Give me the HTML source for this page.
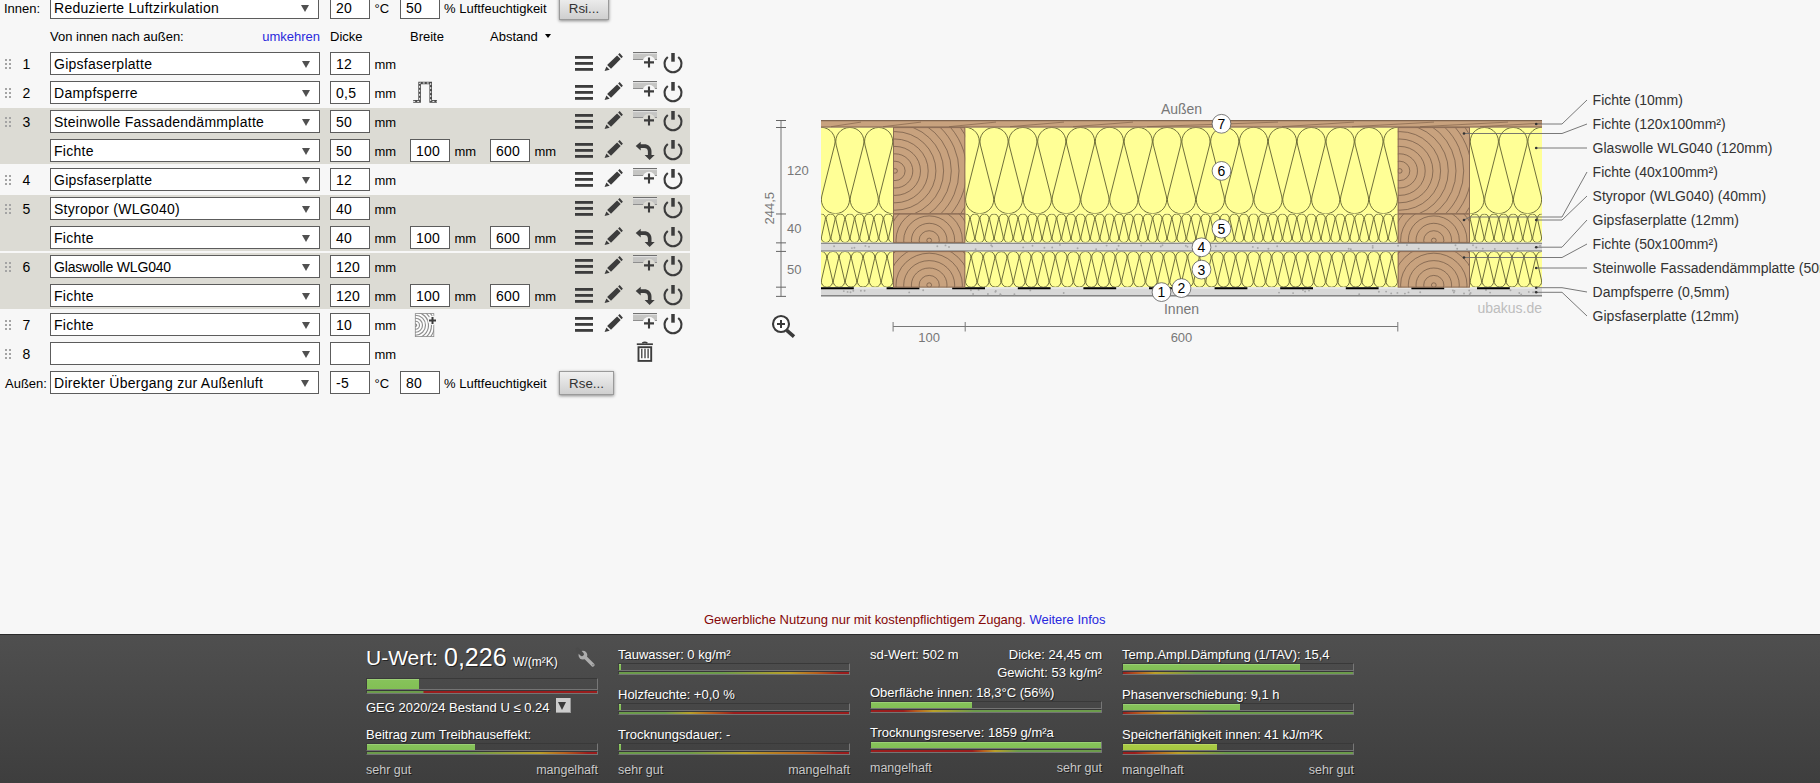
<!DOCTYPE html>
<html><head><meta charset="utf-8"><title>U-Wert</title>
<style>
html,body{margin:0;padding:0}
body{width:1820px;height:783px;overflow:hidden;position:relative;background:#f7f7f7;font-family:"Liberation Sans",sans-serif;font-size:13px;color:#000}
.ab{position:absolute}
.t{position:absolute;white-space:nowrap;line-height:23px;height:23px}
.sel,.inp{position:absolute;box-sizing:border-box;height:23px;border:1px solid #5c5c5c;background:#fff;font-size:14px;line-height:23px;white-space:nowrap;overflow:hidden;letter-spacing:.27px}
.sel{padding-left:3px}
.sel:after{content:"";position:absolute;right:9.5px;top:7.5px;border-left:4.2px solid transparent;border-right:4.2px solid transparent;border-top:7.4px solid #505050}
.inp{width:40px;padding-left:5px}
.gr{position:absolute;left:0;width:690px;background:#dcdbd4}
.btn{position:absolute;box-sizing:border-box;height:24px;border:1px solid #9a9a9a;background:linear-gradient(#f0f0f0,#cfcfcf);box-shadow:0 1px 3px rgba(0,0,0,.45);font-size:13.33px;line-height:23.6px;text-align:center;color:#333}
svg{overflow:visible}
#pn{position:absolute;left:0;top:634px;width:1820px;height:149px;background:linear-gradient(#4f4f4f,#3e3e3e);border-top:1px solid #2b2b2b;box-sizing:border-box;color:#fff;text-shadow:1px 1px 0 rgba(0,0,0,.55)}
#pn .p{position:absolute;white-space:nowrap;line-height:15px}
.bar{position:absolute;width:232px;box-sizing:border-box}
.bar i{display:block;position:absolute;left:0;width:232px;box-sizing:border-box}
.lo{color:#c8c8c8;font-size:12.5px}
</style></head><body>
<svg width="0" height="0" style="position:absolute"><defs>
<linearGradient id="lg" x1="0" y1="0" x2="0" y2="1"><stop offset="0" stop-color="#8c8c8c"/><stop offset=".16" stop-color="#d6d6d6"/><stop offset=".8" stop-color="#c6c6c6"/><stop offset="1" stop-color="#dedede"/></linearGradient>
<g id="ham" fill="#3c3c3c"><rect x="0" y="4" width="18" height="2.8"/><rect x="0" y="10" width="18" height="2.8"/><rect x="0" y="16" width="18" height="2.8"/></g>
<g id="pen" fill="#3c3c3c"><path d="M0 18.9L1.8 14.4L5.1 17.7Z"/><path d="M2.5 13.1L12.5 3.4L16.1 7L6.4 16.7Z"/><path d="M13.5 2.4L15 1L18.3 4.8L16.8 6.3Z"/></g>
<g id="add"><rect x="0" y="0" width="24" height="8" fill="#c5c5c3"/><rect x="0" y="0" width="24" height="1" fill="#707070"/><rect x="0" y="1" width="24" height="1.1" fill="#e0e0df"/><rect x="0" y="7" width="24" height="1" fill="#8e8e8e"/><circle cx="16" cy="10.4" r="6.6" fill="currentColor"/><path d="M11 10.4H21M16 5.4V15.4" stroke="#3c3c3c" stroke-width="2.1" fill="none"/></g>
<g id="pow" fill="none" stroke="#3c3c3c"><path d="M5.2 5A8.5 8.5 0 1 1 -5.2 5" stroke-width="2.1"/><path d="M0 1V9.7" stroke-width="3.5"/></g>
<g id="ret" fill="#3c3c3c"><path d="M0 7.1L5 2.7V5.3H8.5C12.5 5.3 15.8 8 15.8 12.5V16H19L13.9 21L8.9 16H12.2V12.5C12.2 10 10.6 8.9 8.5 8.9H5V11.6Z"/></g>
<g id="drg" fill="#a4a4a4"><rect x="0" y="0" width="2" height="2"/><rect x="4" y="0" width="2" height="2"/><rect x="0" y="4" width="2" height="2"/><rect x="4" y="4" width="2" height="2"/><rect x="0" y="8" width="2" height="2"/><rect x="4" y="8" width="2" height="2"/></g>
</defs></svg>
<div class="gr" style="top:108px;height:56px"></div>
<div class="gr" style="top:195px;height:56px"></div>
<div class="gr" style="top:253px;height:56px"></div>
<div class="t" style="left:4px;top:-3px;">Innen:</div>
<div class="sel" style="left:50px;top:-4px;width:269px">Reduzierte Luftzirkulation</div>
<div class="inp" style="left:330px;top:-4px">20</div>
<div class="t" style="left:374.5px;top:-3px;">°C</div>
<div class="inp" style="left:400px;top:-4px">50</div>
<div class="t" style="left:444px;top:-3px;">% Luftfeuchtigkeit</div>
<div class="btn" style="left:559px;top:-4px;width:50px;height:24px">Rsi...</div>
<div class="t" style="left:50px;top:25px">Von innen nach außen:</div>
<div class="t" style="left:262px;top:25px;width:58px;text-align:right;color:#2a2adc">umkehren</div>
<div class="t" style="left:330px;top:25px">Dicke</div><div class="t" style="left:410px;top:25px">Breite</div><div class="t" style="left:490px;top:25px">Abstand</div>
<div class="ab" style="left:544.6px;top:33.8px;border-left:3.1px solid transparent;border-right:3.1px solid transparent;border-top:4.9px solid #000"></div>
<div class="t" style="left:19px;top:53px;width:15px;text-align:center;font-size:14px">1</div>
<div class="sel" style="left:50px;top:52px;width:270px">Gipsfaserplatte</div>
<div class="inp" style="left:330px;top:52px">12</div>
<div class="t" style="left:374.5px;top:53px;">mm</div>
<div class="t" style="left:19px;top:82px;width:15px;text-align:center;font-size:14px">2</div>
<div class="sel" style="left:50px;top:81px;width:270px">Dampfsperre</div>
<div class="inp" style="left:330px;top:81px">0,5</div>
<div class="t" style="left:374.5px;top:82px;">mm</div>
<div class="t" style="left:19px;top:111px;width:15px;text-align:center;font-size:14px">3</div>
<div class="sel" style="left:50px;top:110px;width:270px">Steinwolle Fassadendämmplatte</div>
<div class="inp" style="left:330px;top:110px">50</div>
<div class="t" style="left:374.5px;top:111px;">mm</div>
<div class="sel" style="left:50px;top:139px;width:270px">Fichte</div>
<div class="inp" style="left:330px;top:139px">50</div>
<div class="t" style="left:374.5px;top:140px;">mm</div>
<div class="inp" style="left:410px;top:139px">100</div>
<div class="t" style="left:454.5px;top:140px;">mm</div>
<div class="inp" style="left:490px;top:139px">600</div>
<div class="t" style="left:534.5px;top:140px;">mm</div>
<div class="t" style="left:19px;top:169px;width:15px;text-align:center;font-size:14px">4</div>
<div class="sel" style="left:50px;top:168px;width:270px">Gipsfaserplatte</div>
<div class="inp" style="left:330px;top:168px">12</div>
<div class="t" style="left:374.5px;top:169px;">mm</div>
<div class="t" style="left:19px;top:198px;width:15px;text-align:center;font-size:14px">5</div>
<div class="sel" style="left:50px;top:197px;width:270px">Styropor (WLG040)</div>
<div class="inp" style="left:330px;top:197px">40</div>
<div class="t" style="left:374.5px;top:198px;">mm</div>
<div class="sel" style="left:50px;top:226px;width:270px">Fichte</div>
<div class="inp" style="left:330px;top:226px">40</div>
<div class="t" style="left:374.5px;top:227px;">mm</div>
<div class="inp" style="left:410px;top:226px">100</div>
<div class="t" style="left:454.5px;top:227px;">mm</div>
<div class="inp" style="left:490px;top:226px">600</div>
<div class="t" style="left:534.5px;top:227px;">mm</div>
<div class="t" style="left:19px;top:256px;width:15px;text-align:center;font-size:14px">6</div>
<div class="sel" style="left:50px;top:255px;width:270px;letter-spacing:-.18px">Glaswolle WLG040</div>
<div class="inp" style="left:330px;top:255px">120</div>
<div class="t" style="left:374.5px;top:256px;">mm</div>
<div class="sel" style="left:50px;top:284px;width:270px">Fichte</div>
<div class="inp" style="left:330px;top:284px">120</div>
<div class="t" style="left:374.5px;top:285px;">mm</div>
<div class="inp" style="left:410px;top:284px">100</div>
<div class="t" style="left:454.5px;top:285px;">mm</div>
<div class="inp" style="left:490px;top:284px">600</div>
<div class="t" style="left:534.5px;top:285px;">mm</div>
<div class="t" style="left:19px;top:314px;width:15px;text-align:center;font-size:14px">7</div>
<div class="sel" style="left:50px;top:313px;width:270px">Fichte</div>
<div class="inp" style="left:330px;top:313px">10</div>
<div class="t" style="left:374.5px;top:314px;">mm</div>
<div class="t" style="left:19px;top:343px;width:15px;text-align:center;font-size:14px">8</div>
<div class="sel" style="left:50px;top:342px;width:270px"></div>
<div class="inp" style="left:330px;top:342px"></div>
<div class="t" style="left:374.5px;top:343px;">mm</div>
<div class="t" style="left:5px;top:372px;">Außen:</div>
<div class="sel" style="left:50px;top:371px;width:269px">Direkter Übergang zur Außenluft</div>
<div class="inp" style="left:330px;top:371px">-5</div>
<div class="t" style="left:374.5px;top:372px;">°C</div>
<div class="inp" style="left:400px;top:371px">80</div>
<div class="t" style="left:444px;top:372px;">% Luftfeuchtigkeit</div>
<div class="btn" style="left:559px;top:371px;width:55px;height:24px">Rse...</div>
<svg class="ab" style="left:0;top:0" width="700" height="400" viewBox="0 0 700 400">
<use href="#drg" x="5" y="59"/><use href="#ham" x="575" y="52"/><use href="#pen" x="604.6" y="52"/><use href="#pow" x="673" y="52"/><use href="#add" x="633" y="52" style="color:#f7f7f7"/><use href="#drg" x="5" y="88"/><use href="#ham" x="575" y="81"/><use href="#pen" x="604.6" y="81"/><use href="#pow" x="673" y="81"/><use href="#add" x="633" y="81" style="color:#f7f7f7"/><use href="#drg" x="5" y="117"/><use href="#ham" x="575" y="110"/><use href="#pen" x="604.6" y="110"/><use href="#pow" x="673" y="110"/><use href="#add" x="633" y="110" style="color:#dcdbd4"/><use href="#ham" x="575" y="139"/><use href="#pen" x="604.6" y="139"/><use href="#pow" x="673" y="139"/><use href="#ret" x="635.7" y="139"/><use href="#drg" x="5" y="175"/><use href="#ham" x="575" y="168"/><use href="#pen" x="604.6" y="168"/><use href="#pow" x="673" y="168"/><use href="#add" x="633" y="168" style="color:#f7f7f7"/><use href="#drg" x="5" y="204"/><use href="#ham" x="575" y="197"/><use href="#pen" x="604.6" y="197"/><use href="#pow" x="673" y="197"/><use href="#add" x="633" y="197" style="color:#dcdbd4"/><use href="#ham" x="575" y="226"/><use href="#pen" x="604.6" y="226"/><use href="#pow" x="673" y="226"/><use href="#ret" x="635.7" y="226"/><use href="#drg" x="5" y="262"/><use href="#ham" x="575" y="255"/><use href="#pen" x="604.6" y="255"/><use href="#pow" x="673" y="255"/><use href="#add" x="633" y="255" style="color:#dcdbd4"/><use href="#ham" x="575" y="284"/><use href="#pen" x="604.6" y="284"/><use href="#pow" x="673" y="284"/><use href="#ret" x="635.7" y="284"/><use href="#drg" x="5" y="320"/><use href="#ham" x="575" y="313"/><use href="#pen" x="604.6" y="313"/><use href="#pow" x="673" y="313"/><use href="#add" x="633" y="313" style="color:#f7f7f7"/><use href="#drg" x="5" y="349"/>
<g fill="none"><path d="M413.2 101.4H419.6V83H430.7V101.4H436.9" stroke="#4a4a4a" stroke-width="2.6"/><path d="M413.2 101.4H419.6V83H430.7V101.4H436.9" stroke="#f4f4f4" stroke-width="1" stroke-dasharray="2 2"/></g>
<g><clipPath id="wc"><rect x="415" y="313.3" width="19" height="23.5"/></clipPath><rect x="415" y="313.3" width="19" height="23.5" fill="#fdfdfd"/><g clip-path="url(#wc)" fill="none" stroke="#8e8e8e" stroke-width="1.15"><circle cx="415.5" cy="325.2" r="1.2"/><circle cx="415.5" cy="325.2" r="4"/><circle cx="415.5" cy="325.2" r="7"/><circle cx="415.5" cy="325.2" r="10"/><circle cx="415.5" cy="325.2" r="13"/><circle cx="415.5" cy="325.2" r="16"/><circle cx="415.5" cy="325.2" r="19"/><circle cx="415.5" cy="325.2" r="22"/></g><rect x="415.3" y="313.6" width="18.5" height="23" stroke="#8c8c8c" stroke-width=".8" fill="none"/><circle cx="432.5" cy="320.4" r="4.6" fill="#f7f7f7"/><path d="M429 320.4H436M432.5 316.9V323.9" stroke="#3c3c3c" stroke-width="2" fill="none"/></g>
<g fill="none" stroke="#3c3c3c"><path d="M636.8 344.2H652.9" stroke-width="1.7"/><path d="M642.3 343.2Q644.8 341.4 647.4 343.2" stroke-width="1.6"/><rect x="638.5" y="347.2" width="12.7" height="13.7" stroke-width="1.9" fill="#fff"/><path d="M641.8 348.8V358.2M645 348.8V358.2M648.1 348.8V358.2" stroke-width="1.3"/></g>
</svg>
<svg width="1080" height="300" viewBox="740 60 1080 300" style="position:absolute;left:740px;top:60px;font-family:'Liberation Sans',sans-serif">
<defs>
<clipPath id="cA"><rect x="821" y="120.1" width="721" height="176.3"/></clipPath>
<clipPath id="b00"><rect x="893.1" y="127.3" width="72.1" height="86.5"/></clipPath>
<clipPath id="b01"><rect x="893.1" y="213.8" width="72.1" height="28.8"/></clipPath>
<clipPath id="b02"><rect x="893.1" y="251.3" width="72.1" height="36"/></clipPath>
<clipPath id="b10"><rect x="1397.8" y="127.3" width="72.1" height="86.5"/></clipPath>
<clipPath id="b11"><rect x="1397.8" y="213.8" width="72.1" height="28.8"/></clipPath>
<clipPath id="b12"><rect x="1397.8" y="251.3" width="72.1" height="36"/></clipPath>
<clipPath id="w1"><rect x="821" y="127.3" width="721" height="86.5"/></clipPath>
<clipPath id="w2"><rect x="821" y="213.8" width="721" height="28.8"/></clipPath>
<clipPath id="w4"><rect x="821" y="251.3" width="721" height="36"/></clipPath>
</defs>
<rect x="821" y="127.3" width="721" height="86.5" fill="#ffff96"/>
<path clip-path="url(#w1)" d="M778.5 145.1A14.1 14.1 0 1 1 805.8 145.1L792.9 196A14.1 14.1 0 1 0 820.2 196L807.4 145.1A14.1 14.1 0 1 1 834.6 145.1L821.8 196A14.1 14.1 0 1 0 849.1 196L836.2 145.1A14.1 14.1 0 1 1 863.5 145.1L850.6 196A14.1 14.1 0 1 0 877.9 196L865 145.1A14.1 14.1 0 1 1 892.3 145.1L879.5 196A14.1 14.1 0 1 0 906.7 196L893.9 145.1A14.1 14.1 0 1 1 921.2 145.1L908.3 196A14.1 14.1 0 1 0 935.6 196L922.7 145.1A14.1 14.1 0 1 1 950 145.1L937.1 196A14.1 14.1 0 1 0 964.4 196L951.6 145.1A14.1 14.1 0 1 1 978.8 145.1L966 196A14.1 14.1 0 1 0 993.3 196L980.4 145.1A14.1 14.1 0 1 1 1007.7 145.1L994.8 196A14.1 14.1 0 1 0 1022.1 196L1009.2 145.1A14.1 14.1 0 1 1 1036.5 145.1L1023.7 196A14.1 14.1 0 1 0 1050.9 196L1038.1 145.1A14.1 14.1 0 1 1 1065.4 145.1L1052.5 196A14.1 14.1 0 1 0 1079.8 196L1066.9 145.1A14.1 14.1 0 1 1 1094.2 145.1L1081.3 196A14.1 14.1 0 1 0 1108.6 196L1095.8 145.1A14.1 14.1 0 1 1 1123 145.1L1110.2 196A14.1 14.1 0 1 0 1137.5 196L1124.6 145.1A14.1 14.1 0 1 1 1151.9 145.1L1139 196A14.1 14.1 0 1 0 1166.3 196L1153.4 145.1A14.1 14.1 0 1 1 1180.7 145.1L1167.9 196A14.1 14.1 0 1 0 1195.1 196L1182.3 145.1A14.1 14.1 0 1 1 1209.6 145.1L1196.7 196A14.1 14.1 0 1 0 1224 196L1211.1 145.1A14.1 14.1 0 1 1 1238.4 145.1L1225.5 196A14.1 14.1 0 1 0 1252.8 196L1240 145.1A14.1 14.1 0 1 1 1267.2 145.1L1254.4 196A14.1 14.1 0 1 0 1281.7 196L1268.8 145.1A14.1 14.1 0 1 1 1296.1 145.1L1283.2 196A14.1 14.1 0 1 0 1310.5 196L1297.6 145.1A14.1 14.1 0 1 1 1324.9 145.1L1312.1 196A14.1 14.1 0 1 0 1339.3 196L1326.5 145.1A14.1 14.1 0 1 1 1353.8 145.1L1340.9 196A14.1 14.1 0 1 0 1368.2 196L1355.3 145.1A14.1 14.1 0 1 1 1382.6 145.1L1369.7 196A14.1 14.1 0 1 0 1397 196L1384.2 145.1A14.1 14.1 0 1 1 1411.4 145.1L1398.6 196A14.1 14.1 0 1 0 1425.9 196L1413 145.1A14.1 14.1 0 1 1 1440.3 145.1L1427.4 196A14.1 14.1 0 1 0 1454.7 196L1441.8 145.1A14.1 14.1 0 1 1 1469.1 145.1L1456.3 196A14.1 14.1 0 1 0 1483.5 196L1470.7 145.1A14.1 14.1 0 1 1 1498 145.1L1485.1 196A14.1 14.1 0 1 0 1512.4 196L1499.5 145.1A14.1 14.1 0 1 1 1526.8 145.1L1513.9 196A14.1 14.1 0 1 0 1541.2 196L1528.4 145.1A14.1 14.1 0 1 1 1555.6 145.1L1542.8 196A14.1 14.1 0 1 0 1570.1 196L1557.2 145.1A14.1 14.1 0 1 1 1584.5 145.1L1571.6 196A14.1 14.1 0 1 0 1598.9 196L1586 145.1" fill="none" stroke="#55552a" stroke-width="0.85"/>
<rect x="821" y="213.8" width="721" height="28.8" fill="#ffff96"/>
<path clip-path="url(#w2)" d="M807 219.6A4.5 4.5 0 1 1 815.7 219.6L811.8 236.9A4.5 4.5 0 1 0 820.5 236.9L816.7 219.6A4.5 4.5 0 1 1 825.3 219.6L821.5 236.9A4.5 4.5 0 1 0 830.2 236.9L826.3 219.6A4.5 4.5 0 1 1 835 219.6L831.1 236.9A4.5 4.5 0 1 0 839.8 236.9L835.9 219.6A4.5 4.5 0 1 1 844.6 219.6L840.7 236.9A4.5 4.5 0 1 0 849.4 236.9L845.5 219.6A4.5 4.5 0 1 1 854.2 219.6L850.3 236.9A4.5 4.5 0 1 0 859 236.9L855.1 219.6A4.5 4.5 0 1 1 863.8 219.6L859.9 236.9A4.5 4.5 0 1 0 868.6 236.9L864.7 219.6A4.5 4.5 0 1 1 873.4 219.6L869.5 236.9A4.5 4.5 0 1 0 878.2 236.9L874.3 219.6A4.5 4.5 0 1 1 883 219.6L879.1 236.9A4.5 4.5 0 1 0 887.8 236.9L883.9 219.6A4.5 4.5 0 1 1 892.6 219.6L888.8 236.9A4.5 4.5 0 1 0 897.4 236.9L893.6 219.6A4.5 4.5 0 1 1 902.3 219.6L898.4 236.9A4.5 4.5 0 1 0 907.1 236.9L903.2 219.6A4.5 4.5 0 1 1 911.9 219.6L908 236.9A4.5 4.5 0 1 0 916.7 236.9L912.8 219.6A4.5 4.5 0 1 1 921.5 219.6L917.6 236.9A4.5 4.5 0 1 0 926.3 236.9L922.4 219.6A4.5 4.5 0 1 1 931.1 219.6L927.2 236.9A4.5 4.5 0 1 0 935.9 236.9L932 219.6A4.5 4.5 0 1 1 940.7 219.6L936.8 236.9A4.5 4.5 0 1 0 945.5 236.9L941.6 219.6A4.5 4.5 0 1 1 950.3 219.6L946.4 236.9A4.5 4.5 0 1 0 955.1 236.9L951.2 219.6A4.5 4.5 0 1 1 959.9 219.6L956 236.9A4.5 4.5 0 1 0 964.7 236.9L960.9 219.6A4.5 4.5 0 1 1 969.5 219.6L965.7 236.9A4.5 4.5 0 1 0 974.4 236.9L970.5 219.6A4.5 4.5 0 1 1 979.2 219.6L975.3 236.9A4.5 4.5 0 1 0 984 236.9L980.1 219.6A4.5 4.5 0 1 1 988.8 219.6L984.9 236.9A4.5 4.5 0 1 0 993.6 236.9L989.7 219.6A4.5 4.5 0 1 1 998.4 219.6L994.5 236.9A4.5 4.5 0 1 0 1003.2 236.9L999.3 219.6A4.5 4.5 0 1 1 1008 219.6L1004.1 236.9A4.5 4.5 0 1 0 1012.8 236.9L1008.9 219.6A4.5 4.5 0 1 1 1017.6 219.6L1013.7 236.9A4.5 4.5 0 1 0 1022.4 236.9L1018.5 219.6A4.5 4.5 0 1 1 1027.2 219.6L1023.3 236.9A4.5 4.5 0 1 0 1032 236.9L1028.1 219.6A4.5 4.5 0 1 1 1036.8 219.6L1033 236.9A4.5 4.5 0 1 0 1041.6 236.9L1037.8 219.6A4.5 4.5 0 1 1 1046.5 219.6L1042.6 236.9A4.5 4.5 0 1 0 1051.3 236.9L1047.4 219.6A4.5 4.5 0 1 1 1056.1 219.6L1052.2 236.9A4.5 4.5 0 1 0 1060.9 236.9L1057 219.6A4.5 4.5 0 1 1 1065.7 219.6L1061.8 236.9A4.5 4.5 0 1 0 1070.5 236.9L1066.6 219.6A4.5 4.5 0 1 1 1075.3 219.6L1071.4 236.9A4.5 4.5 0 1 0 1080.1 236.9L1076.2 219.6A4.5 4.5 0 1 1 1084.9 219.6L1081 236.9A4.5 4.5 0 1 0 1089.7 236.9L1085.8 219.6A4.5 4.5 0 1 1 1094.5 219.6L1090.6 236.9A4.5 4.5 0 1 0 1099.3 236.9L1095.4 219.6A4.5 4.5 0 1 1 1104.1 219.6L1100.2 236.9A4.5 4.5 0 1 0 1108.9 236.9L1105.1 219.6A4.5 4.5 0 1 1 1113.7 219.6L1109.9 236.9A4.5 4.5 0 1 0 1118.6 236.9L1114.7 219.6A4.5 4.5 0 1 1 1123.4 219.6L1119.5 236.9A4.5 4.5 0 1 0 1128.2 236.9L1124.3 219.6A4.5 4.5 0 1 1 1133 219.6L1129.1 236.9A4.5 4.5 0 1 0 1137.8 236.9L1133.9 219.6A4.5 4.5 0 1 1 1142.6 219.6L1138.7 236.9A4.5 4.5 0 1 0 1147.4 236.9L1143.5 219.6A4.5 4.5 0 1 1 1152.2 219.6L1148.3 236.9A4.5 4.5 0 1 0 1157 236.9L1153.1 219.6A4.5 4.5 0 1 1 1161.8 219.6L1157.9 236.9A4.5 4.5 0 1 0 1166.6 236.9L1162.7 219.6A4.5 4.5 0 1 1 1171.4 219.6L1167.5 236.9A4.5 4.5 0 1 0 1176.2 236.9L1172.3 219.6A4.5 4.5 0 1 1 1181 219.6L1177.2 236.9A4.5 4.5 0 1 0 1185.8 236.9L1182 219.6A4.5 4.5 0 1 1 1190.7 219.6L1186.8 236.9A4.5 4.5 0 1 0 1195.5 236.9L1191.6 219.6A4.5 4.5 0 1 1 1200.3 219.6L1196.4 236.9A4.5 4.5 0 1 0 1205.1 236.9L1201.2 219.6A4.5 4.5 0 1 1 1209.9 219.6L1206 236.9A4.5 4.5 0 1 0 1214.7 236.9L1210.8 219.6A4.5 4.5 0 1 1 1219.5 219.6L1215.6 236.9A4.5 4.5 0 1 0 1224.3 236.9L1220.4 219.6A4.5 4.5 0 1 1 1229.1 219.6L1225.2 236.9A4.5 4.5 0 1 0 1233.9 236.9L1230 219.6A4.5 4.5 0 1 1 1238.7 219.6L1234.8 236.9A4.5 4.5 0 1 0 1243.5 236.9L1239.6 219.6A4.5 4.5 0 1 1 1248.3 219.6L1244.4 236.9A4.5 4.5 0 1 0 1253.1 236.9L1249.3 219.6A4.5 4.5 0 1 1 1257.9 219.6L1254.1 236.9A4.5 4.5 0 1 0 1262.8 236.9L1258.9 219.6A4.5 4.5 0 1 1 1267.6 219.6L1263.7 236.9A4.5 4.5 0 1 0 1272.4 236.9L1268.5 219.6A4.5 4.5 0 1 1 1277.2 219.6L1273.3 236.9A4.5 4.5 0 1 0 1282 236.9L1278.1 219.6A4.5 4.5 0 1 1 1286.8 219.6L1282.9 236.9A4.5 4.5 0 1 0 1291.6 236.9L1287.7 219.6A4.5 4.5 0 1 1 1296.4 219.6L1292.5 236.9A4.5 4.5 0 1 0 1301.2 236.9L1297.3 219.6A4.5 4.5 0 1 1 1306 219.6L1302.1 236.9A4.5 4.5 0 1 0 1310.8 236.9L1306.9 219.6A4.5 4.5 0 1 1 1315.6 219.6L1311.7 236.9A4.5 4.5 0 1 0 1320.4 236.9L1316.5 219.6A4.5 4.5 0 1 1 1325.2 219.6L1321.4 236.9A4.5 4.5 0 1 0 1330 236.9L1326.2 219.6A4.5 4.5 0 1 1 1334.9 219.6L1331 236.9A4.5 4.5 0 1 0 1339.7 236.9L1335.8 219.6A4.5 4.5 0 1 1 1344.5 219.6L1340.6 236.9A4.5 4.5 0 1 0 1349.3 236.9L1345.4 219.6A4.5 4.5 0 1 1 1354.1 219.6L1350.2 236.9A4.5 4.5 0 1 0 1358.9 236.9L1355 219.6A4.5 4.5 0 1 1 1363.7 219.6L1359.8 236.9A4.5 4.5 0 1 0 1368.5 236.9L1364.6 219.6A4.5 4.5 0 1 1 1373.3 219.6L1369.4 236.9A4.5 4.5 0 1 0 1378.1 236.9L1374.2 219.6A4.5 4.5 0 1 1 1382.9 219.6L1379 236.9A4.5 4.5 0 1 0 1387.7 236.9L1383.8 219.6A4.5 4.5 0 1 1 1392.5 219.6L1388.6 236.9A4.5 4.5 0 1 0 1397.3 236.9L1393.5 219.6A4.5 4.5 0 1 1 1402.1 219.6L1398.3 236.9A4.5 4.5 0 1 0 1407 236.9L1403.1 219.6A4.5 4.5 0 1 1 1411.8 219.6L1407.9 236.9A4.5 4.5 0 1 0 1416.6 236.9L1412.7 219.6A4.5 4.5 0 1 1 1421.4 219.6L1417.5 236.9A4.5 4.5 0 1 0 1426.2 236.9L1422.3 219.6A4.5 4.5 0 1 1 1431 219.6L1427.1 236.9A4.5 4.5 0 1 0 1435.8 236.9L1431.9 219.6A4.5 4.5 0 1 1 1440.6 219.6L1436.7 236.9A4.5 4.5 0 1 0 1445.4 236.9L1441.5 219.6A4.5 4.5 0 1 1 1450.2 219.6L1446.3 236.9A4.5 4.5 0 1 0 1455 236.9L1451.1 219.6A4.5 4.5 0 1 1 1459.8 219.6L1455.9 236.9A4.5 4.5 0 1 0 1464.6 236.9L1460.7 219.6A4.5 4.5 0 1 1 1469.4 219.6L1465.6 236.9A4.5 4.5 0 1 0 1474.2 236.9L1470.4 219.6A4.5 4.5 0 1 1 1479.1 219.6L1475.2 236.9A4.5 4.5 0 1 0 1483.9 236.9L1480 219.6A4.5 4.5 0 1 1 1488.7 219.6L1484.8 236.9A4.5 4.5 0 1 0 1493.5 236.9L1489.6 219.6A4.5 4.5 0 1 1 1498.3 219.6L1494.4 236.9A4.5 4.5 0 1 0 1503.1 236.9L1499.2 219.6A4.5 4.5 0 1 1 1507.9 219.6L1504 236.9A4.5 4.5 0 1 0 1512.7 236.9L1508.8 219.6A4.5 4.5 0 1 1 1517.5 219.6L1513.6 236.9A4.5 4.5 0 1 0 1522.3 236.9L1518.4 219.6A4.5 4.5 0 1 1 1527.1 219.6L1523.2 236.9A4.5 4.5 0 1 0 1531.9 236.9L1528 219.6A4.5 4.5 0 1 1 1536.7 219.6L1532.8 236.9A4.5 4.5 0 1 0 1541.5 236.9L1537.7 219.6A4.5 4.5 0 1 1 1546.3 219.6L1542.5 236.9A4.5 4.5 0 1 0 1551.2 236.9L1547.3 219.6" fill="none" stroke="#55552a" stroke-width="0.85"/>
<rect x="821" y="251.3" width="721" height="36" fill="#ffff96"/>
<path clip-path="url(#w4)" d="M803.5 258.6A5.7 5.7 0 1 1 814.5 258.6L809.5 280.1A5.7 5.7 0 1 0 820.5 280.1L815.5 258.6A5.7 5.7 0 1 1 826.5 258.6L821.5 280.1A5.7 5.7 0 1 0 832.5 280.1L827.5 258.6A5.7 5.7 0 1 1 838.5 258.6L833.5 280.1A5.7 5.7 0 1 0 844.5 280.1L839.5 258.6A5.7 5.7 0 1 1 850.5 258.6L845.5 280.1A5.7 5.7 0 1 0 856.6 280.1L851.5 258.6A5.7 5.7 0 1 1 862.6 258.6L857.5 280.1A5.7 5.7 0 1 0 868.6 280.1L863.6 258.6A5.7 5.7 0 1 1 874.6 258.6L869.6 280.1A5.7 5.7 0 1 0 880.6 280.1L875.6 258.6A5.7 5.7 0 1 1 886.6 258.6L881.6 280.1A5.7 5.7 0 1 0 892.6 280.1L887.6 258.6A5.7 5.7 0 1 1 898.6 258.6L893.6 280.1A5.7 5.7 0 1 0 904.6 280.1L899.6 258.6A5.7 5.7 0 1 1 910.6 258.6L905.6 280.1A5.7 5.7 0 1 0 916.6 280.1L911.6 258.6A5.7 5.7 0 1 1 922.6 258.6L917.6 280.1A5.7 5.7 0 1 0 928.7 280.1L923.6 258.6A5.7 5.7 0 1 1 934.7 258.6L929.6 280.1A5.7 5.7 0 1 0 940.7 280.1L935.7 258.6A5.7 5.7 0 1 1 946.7 258.6L941.7 280.1A5.7 5.7 0 1 0 952.7 280.1L947.7 258.6A5.7 5.7 0 1 1 958.7 258.6L953.7 280.1A5.7 5.7 0 1 0 964.7 280.1L959.7 258.6A5.7 5.7 0 1 1 970.7 258.6L965.7 280.1A5.7 5.7 0 1 0 976.7 280.1L971.7 258.6A5.7 5.7 0 1 1 982.7 258.6L977.7 280.1A5.7 5.7 0 1 0 988.7 280.1L983.7 258.6A5.7 5.7 0 1 1 994.7 258.6L989.7 280.1A5.7 5.7 0 1 0 1000.8 280.1L995.7 258.6A5.7 5.7 0 1 1 1006.8 258.6L1001.7 280.1A5.7 5.7 0 1 0 1012.8 280.1L1007.8 258.6A5.7 5.7 0 1 1 1018.8 258.6L1013.8 280.1A5.7 5.7 0 1 0 1024.8 280.1L1019.8 258.6A5.7 5.7 0 1 1 1030.8 258.6L1025.8 280.1A5.7 5.7 0 1 0 1036.8 280.1L1031.8 258.6A5.7 5.7 0 1 1 1042.8 258.6L1037.8 280.1A5.7 5.7 0 1 0 1048.8 280.1L1043.8 258.6A5.7 5.7 0 1 1 1054.8 258.6L1049.8 280.1A5.7 5.7 0 1 0 1060.8 280.1L1055.8 258.6A5.7 5.7 0 1 1 1066.8 258.6L1061.8 280.1A5.7 5.7 0 1 0 1072.9 280.1L1067.8 258.6A5.7 5.7 0 1 1 1078.9 258.6L1073.8 280.1A5.7 5.7 0 1 0 1084.9 280.1L1079.9 258.6A5.7 5.7 0 1 1 1090.9 258.6L1085.9 280.1A5.7 5.7 0 1 0 1096.9 280.1L1091.9 258.6A5.7 5.7 0 1 1 1102.9 258.6L1097.9 280.1A5.7 5.7 0 1 0 1108.9 280.1L1103.9 258.6A5.7 5.7 0 1 1 1114.9 258.6L1109.9 280.1A5.7 5.7 0 1 0 1120.9 280.1L1115.9 258.6A5.7 5.7 0 1 1 1126.9 258.6L1121.9 280.1A5.7 5.7 0 1 0 1132.9 280.1L1127.9 258.6A5.7 5.7 0 1 1 1138.9 258.6L1133.9 280.1A5.7 5.7 0 1 0 1145 280.1L1139.9 258.6A5.7 5.7 0 1 1 1151 258.6L1145.9 280.1A5.7 5.7 0 1 0 1157 280.1L1152 258.6A5.7 5.7 0 1 1 1163 258.6L1158 280.1A5.7 5.7 0 1 0 1169 280.1L1164 258.6A5.7 5.7 0 1 1 1175 258.6L1170 280.1A5.7 5.7 0 1 0 1181 280.1L1176 258.6A5.7 5.7 0 1 1 1187 258.6L1182 280.1A5.7 5.7 0 1 0 1193 280.1L1188 258.6A5.7 5.7 0 1 1 1199 258.6L1194 280.1A5.7 5.7 0 1 0 1205 280.1L1200 258.6A5.7 5.7 0 1 1 1211 258.6L1206 280.1A5.7 5.7 0 1 0 1217.1 280.1L1212 258.6A5.7 5.7 0 1 1 1223.1 258.6L1218 280.1A5.7 5.7 0 1 0 1229.1 280.1L1224.1 258.6A5.7 5.7 0 1 1 1235.1 258.6L1230.1 280.1A5.7 5.7 0 1 0 1241.1 280.1L1236.1 258.6A5.7 5.7 0 1 1 1247.1 258.6L1242.1 280.1A5.7 5.7 0 1 0 1253.1 280.1L1248.1 258.6A5.7 5.7 0 1 1 1259.1 258.6L1254.1 280.1A5.7 5.7 0 1 0 1265.1 280.1L1260.1 258.6A5.7 5.7 0 1 1 1271.1 258.6L1266.1 280.1A5.7 5.7 0 1 0 1277.1 280.1L1272.1 258.6A5.7 5.7 0 1 1 1283.1 258.6L1278.1 280.1A5.7 5.7 0 1 0 1289.2 280.1L1284.1 258.6A5.7 5.7 0 1 1 1295.2 258.6L1290.1 280.1A5.7 5.7 0 1 0 1301.2 280.1L1296.2 258.6A5.7 5.7 0 1 1 1307.2 258.6L1302.2 280.1A5.7 5.7 0 1 0 1313.2 280.1L1308.2 258.6A5.7 5.7 0 1 1 1319.2 258.6L1314.2 280.1A5.7 5.7 0 1 0 1325.2 280.1L1320.2 258.6A5.7 5.7 0 1 1 1331.2 258.6L1326.2 280.1A5.7 5.7 0 1 0 1337.2 280.1L1332.2 258.6A5.7 5.7 0 1 1 1343.2 258.6L1338.2 280.1A5.7 5.7 0 1 0 1349.2 280.1L1344.2 258.6A5.7 5.7 0 1 1 1355.2 258.6L1350.2 280.1A5.7 5.7 0 1 0 1361.3 280.1L1356.2 258.6A5.7 5.7 0 1 1 1367.3 258.6L1362.2 280.1A5.7 5.7 0 1 0 1373.3 280.1L1368.3 258.6A5.7 5.7 0 1 1 1379.3 258.6L1374.3 280.1A5.7 5.7 0 1 0 1385.3 280.1L1380.3 258.6A5.7 5.7 0 1 1 1391.3 258.6L1386.3 280.1A5.7 5.7 0 1 0 1397.3 280.1L1392.3 258.6A5.7 5.7 0 1 1 1403.3 258.6L1398.3 280.1A5.7 5.7 0 1 0 1409.3 280.1L1404.3 258.6A5.7 5.7 0 1 1 1415.3 258.6L1410.3 280.1A5.7 5.7 0 1 0 1421.3 280.1L1416.3 258.6A5.7 5.7 0 1 1 1427.3 258.6L1422.3 280.1A5.7 5.7 0 1 0 1433.4 280.1L1428.3 258.6A5.7 5.7 0 1 1 1439.4 258.6L1434.3 280.1A5.7 5.7 0 1 0 1445.4 280.1L1440.4 258.6A5.7 5.7 0 1 1 1451.4 258.6L1446.4 280.1A5.7 5.7 0 1 0 1457.4 280.1L1452.4 258.6A5.7 5.7 0 1 1 1463.4 258.6L1458.4 280.1A5.7 5.7 0 1 0 1469.4 280.1L1464.4 258.6A5.7 5.7 0 1 1 1475.4 258.6L1470.4 280.1A5.7 5.7 0 1 0 1481.4 280.1L1476.4 258.6A5.7 5.7 0 1 1 1487.4 258.6L1482.4 280.1A5.7 5.7 0 1 0 1493.4 280.1L1488.4 258.6A5.7 5.7 0 1 1 1499.4 258.6L1494.4 280.1A5.7 5.7 0 1 0 1505.5 280.1L1500.4 258.6A5.7 5.7 0 1 1 1511.5 258.6L1506.4 280.1A5.7 5.7 0 1 0 1517.5 280.1L1512.5 258.6A5.7 5.7 0 1 1 1523.5 258.6L1518.5 280.1A5.7 5.7 0 1 0 1529.5 280.1L1524.5 258.6A5.7 5.7 0 1 1 1535.5 258.6L1530.5 280.1A5.7 5.7 0 1 0 1541.5 280.1L1536.5 258.6A5.7 5.7 0 1 1 1547.5 258.6L1542.5 280.1A5.7 5.7 0 1 0 1553.5 280.1L1548.5 258.6A5.7 5.7 0 1 1 1559.5 258.6L1554.5 280.1A5.7 5.7 0 1 0 1565.5 280.1L1560.5 258.6" fill="none" stroke="#55552a" stroke-width="0.85"/>
<rect x="821" y="242.7" width="721" height="8.7" fill="#d8d8d8"/>
<path d="M821 243.4H1542M821 250.9H1542" stroke="#8e8e8e" stroke-width="1.2" fill="none"/>
<g fill="#a8a8a8"><circle cx="991.2" cy="245.3" r="0.95"/><circle cx="1106.6" cy="245.6" r="0.95"/><circle cx="869" cy="246.7" r="0.95"/><circle cx="1482.8" cy="248.6" r="0.95"/><circle cx="1372.7" cy="245.9" r="0.95"/><circle cx="1207.9" cy="246.2" r="0.95"/><circle cx="945.5" cy="245.4" r="0.95"/><circle cx="975.6" cy="249.2" r="0.95"/><circle cx="1418.7" cy="248.6" r="0.95"/><circle cx="1398.1" cy="245.8" r="0.95"/><circle cx="1044.4" cy="247.8" r="0.95"/><circle cx="1348.7" cy="248.8" r="0.95"/><circle cx="1455.5" cy="245.3" r="0.95"/><circle cx="1257.8" cy="248" r="0.95"/><circle cx="1185.8" cy="245.7" r="0.95"/><circle cx="1162.5" cy="245.3" r="0.95"/><circle cx="1494.8" cy="248.9" r="0.95"/><circle cx="1215.8" cy="246.3" r="0.95"/><circle cx="1476.3" cy="247.5" r="0.95"/><circle cx="1457.2" cy="248.8" r="0.95"/><circle cx="1187.5" cy="246.8" r="0.95"/><circle cx="1252.8" cy="246.9" r="0.95"/><circle cx="937.3" cy="246.3" r="0.95"/><circle cx="1406.9" cy="245.1" r="0.95"/><circle cx="854.4" cy="247.8" r="0.95"/><circle cx="1023.2" cy="247.4" r="0.95"/><circle cx="1160.8" cy="246.5" r="0.95"/><circle cx="1540" cy="245.8" r="0.95"/><circle cx="1118.6" cy="245.8" r="0.95"/><circle cx="1277.2" cy="246.2" r="0.95"/><circle cx="1077.6" cy="248.3" r="0.95"/><circle cx="1052.2" cy="247.5" r="0.95"/><circle cx="1473" cy="245.3" r="0.95"/><circle cx="865.4" cy="245.9" r="0.95"/><circle cx="1372.7" cy="247.7" r="0.95"/><circle cx="992.2" cy="246.4" r="0.95"/><circle cx="949" cy="247" r="0.95"/><circle cx="851.9" cy="248.1" r="0.95"/><circle cx="1467" cy="249.3" r="0.95"/><circle cx="1350.8" cy="249.3" r="0.95"/><circle cx="834.1" cy="246.2" r="0.95"/><circle cx="1517.5" cy="248.5" r="0.95"/><circle cx="1116.9" cy="249.3" r="0.95"/><circle cx="1268.4" cy="248.7" r="0.95"/><circle cx="1032.5" cy="245.8" r="0.95"/><circle cx="1141.2" cy="245.5" r="0.95"/><circle cx="1096.2" cy="249.3" r="0.95"/><circle cx="1059.9" cy="244.9" r="0.95"/></g>
<rect x="821" y="287.7" width="721" height="8.7" fill="#d8d8d8"/>
<path d="M821 288.3H1542" stroke="#e4e4e4" stroke-width="1.4" fill="none"/><path d="M821 295.8H1542" stroke="#858585" stroke-width="1.5" fill="none"/>
<g fill="#a8a8a8"><circle cx="853.3" cy="290.7" r="0.95"/><circle cx="1386.1" cy="291.6" r="0.95"/><circle cx="1030.3" cy="290.4" r="0.95"/><circle cx="1528.8" cy="291.9" r="0.95"/><circle cx="970.9" cy="290.2" r="0.95"/><circle cx="860.9" cy="290.7" r="0.95"/><circle cx="1309" cy="290.6" r="0.95"/><circle cx="850.5" cy="292.2" r="0.95"/><circle cx="1000.6" cy="294.6" r="0.95"/><circle cx="909.2" cy="292.4" r="0.95"/><circle cx="1378.9" cy="291.8" r="0.95"/><circle cx="1533.1" cy="292.2" r="0.95"/><circle cx="995.4" cy="291.8" r="0.95"/><circle cx="847.6" cy="291.9" r="0.95"/><circle cx="1000.2" cy="294.1" r="0.95"/><circle cx="1420.2" cy="292.3" r="0.95"/><circle cx="843.8" cy="291.1" r="0.95"/><circle cx="995.8" cy="290.9" r="0.95"/><circle cx="987.9" cy="294" r="0.95"/><circle cx="923.2" cy="290.2" r="0.95"/><circle cx="1490.1" cy="292.6" r="0.95"/><circle cx="1535.2" cy="291.8" r="0.95"/><circle cx="1470.6" cy="293" r="0.95"/><circle cx="1391.2" cy="293.4" r="0.95"/><circle cx="1177.4" cy="290.4" r="0.95"/><circle cx="973.1" cy="294" r="0.95"/><circle cx="1469.7" cy="294.2" r="0.95"/><circle cx="1063.7" cy="293" r="0.95"/><circle cx="1397.4" cy="292.9" r="0.95"/><circle cx="1408.5" cy="292.4" r="0.95"/><circle cx="1293.1" cy="293.1" r="0.95"/><circle cx="1014.4" cy="294.2" r="0.95"/><circle cx="1510.5" cy="290.3" r="0.95"/><circle cx="1521.2" cy="294.4" r="0.95"/><circle cx="1302.9" cy="290.1" r="0.95"/><circle cx="1469.2" cy="290.5" r="0.95"/><circle cx="1519.3" cy="293" r="0.95"/><circle cx="864.6" cy="290.7" r="0.95"/><circle cx="1279" cy="292.6" r="0.95"/><circle cx="1359.2" cy="294.2" r="0.95"/><circle cx="978.6" cy="289.9" r="0.95"/><circle cx="1486" cy="290" r="0.95"/><circle cx="1452.9" cy="290.5" r="0.95"/><circle cx="1404.9" cy="293.6" r="0.95"/><circle cx="1453.9" cy="292.5" r="0.95"/><circle cx="1454.5" cy="290.9" r="0.95"/><circle cx="1305.1" cy="291.5" r="0.95"/><circle cx="1464" cy="293.5" r="0.95"/></g>
<path d="M821 288.2H1542" stroke="#000" stroke-width="1.9" stroke-dasharray="32.8 32.8" fill="none"/>
<rect x="821" y="120.1" width="721" height="7.2" fill="#c8a27e"/>
<path clip-path="url(#cA)" d="M831 126.7L861 122.1M883 126.7L921 122.1M949 126.7L996 122.1M1010 126.7L1064 122.1M1073 126.7L1133 122.1M1147 126.7L1278 122.1M1282 126.7L1354 122.1M1352 126.7L1434 122.1M1420 126.7L1508 122.1M1480 126.7L1560 122.1" stroke="#8a6b52" stroke-width="0.8" fill="none"/>
<path d="M821 120.6H1542M821 127H1542" stroke="#80654f" stroke-width="1.1" fill="none"/>
<rect x="893.1" y="127.3" width="72.1" height="86.5" fill="#c8a27e"/>
<g clip-path="url(#b00)" fill="none" stroke="#6e5644" stroke-width="0.7"><ellipse cx="895" cy="170.9" rx="2.4" ry="2.3"/><ellipse cx="895" cy="170.9" rx="10.1" ry="9.7"/><ellipse cx="895" cy="170.9" rx="17.8" ry="17.1"/><ellipse cx="895" cy="170.9" rx="25.5" ry="24.5"/><ellipse cx="895" cy="170.9" rx="33.2" ry="31.9"/><ellipse cx="895" cy="170.9" rx="40.9" ry="39.3"/><ellipse cx="895" cy="170.9" rx="48.6" ry="46.7"/><ellipse cx="895" cy="170.9" rx="56.3" ry="54"/><ellipse cx="895" cy="170.9" rx="64" ry="61.4"/><ellipse cx="895" cy="170.9" rx="71.7" ry="68.8"/><ellipse cx="895" cy="170.9" rx="79.4" ry="76.2"/><ellipse cx="895" cy="170.9" rx="87.1" ry="83.6"/><ellipse cx="895" cy="170.9" rx="94.8" ry="91"/><ellipse cx="895" cy="170.9" rx="102.5" ry="98.4"/></g>
<rect x="893.5" y="127.6" width="71.3" height="86" fill="none" stroke="#8a6b55" stroke-width="1"/>
<rect x="893.1" y="213.8" width="72.1" height="28.8" fill="#c8a27e"/>
<g clip-path="url(#b01)" fill="none" stroke="#6e5644" stroke-width="0.7"><ellipse cx="929.2" cy="240.4" rx="2.4" ry="2.3"/><ellipse cx="929.2" cy="240.4" rx="10.1" ry="9.7"/><ellipse cx="929.2" cy="240.4" rx="17.8" ry="17.1"/><ellipse cx="929.2" cy="240.4" rx="25.5" ry="24.5"/><ellipse cx="929.2" cy="240.4" rx="33.2" ry="31.9"/><ellipse cx="929.2" cy="240.4" rx="40.9" ry="39.3"/><ellipse cx="929.2" cy="240.4" rx="48.6" ry="46.7"/><ellipse cx="929.2" cy="240.4" rx="56.3" ry="54"/></g>
<rect x="893.5" y="214.1" width="71.3" height="28.3" fill="none" stroke="#8a6b55" stroke-width="1"/>
<rect x="893.1" y="251.3" width="72.1" height="36" fill="#c8a27e"/>
<g clip-path="url(#b02)" fill="none" stroke="#6e5644" stroke-width="0.7"><ellipse cx="929.2" cy="285.1" rx="2.4" ry="2.3"/><ellipse cx="929.2" cy="285.1" rx="10.1" ry="9.7"/><ellipse cx="929.2" cy="285.1" rx="17.8" ry="17.1"/><ellipse cx="929.2" cy="285.1" rx="25.5" ry="24.5"/><ellipse cx="929.2" cy="285.1" rx="33.2" ry="31.9"/><ellipse cx="929.2" cy="285.1" rx="40.9" ry="39.3"/><ellipse cx="929.2" cy="285.1" rx="48.6" ry="46.7"/><ellipse cx="929.2" cy="285.1" rx="56.3" ry="54"/></g>
<rect x="893.5" y="251.6" width="71.3" height="35.5" fill="none" stroke="#8a6b55" stroke-width="1"/>
<rect x="1397.8" y="127.3" width="72.1" height="86.5" fill="#c8a27e"/>
<g clip-path="url(#b10)" fill="none" stroke="#6e5644" stroke-width="0.7"><ellipse cx="1399.7" cy="170.9" rx="2.4" ry="2.3"/><ellipse cx="1399.7" cy="170.9" rx="10.1" ry="9.7"/><ellipse cx="1399.7" cy="170.9" rx="17.8" ry="17.1"/><ellipse cx="1399.7" cy="170.9" rx="25.5" ry="24.5"/><ellipse cx="1399.7" cy="170.9" rx="33.2" ry="31.9"/><ellipse cx="1399.7" cy="170.9" rx="40.9" ry="39.3"/><ellipse cx="1399.7" cy="170.9" rx="48.6" ry="46.7"/><ellipse cx="1399.7" cy="170.9" rx="56.3" ry="54"/><ellipse cx="1399.7" cy="170.9" rx="64" ry="61.4"/><ellipse cx="1399.7" cy="170.9" rx="71.7" ry="68.8"/><ellipse cx="1399.7" cy="170.9" rx="79.4" ry="76.2"/><ellipse cx="1399.7" cy="170.9" rx="87.1" ry="83.6"/><ellipse cx="1399.7" cy="170.9" rx="94.8" ry="91"/><ellipse cx="1399.7" cy="170.9" rx="102.5" ry="98.4"/></g>
<rect x="1398.2" y="127.6" width="71.3" height="86" fill="none" stroke="#8a6b55" stroke-width="1"/>
<rect x="1397.8" y="213.8" width="72.1" height="28.8" fill="#c8a27e"/>
<g clip-path="url(#b11)" fill="none" stroke="#6e5644" stroke-width="0.7"><ellipse cx="1433.8" cy="240.4" rx="2.4" ry="2.3"/><ellipse cx="1433.8" cy="240.4" rx="10.1" ry="9.7"/><ellipse cx="1433.8" cy="240.4" rx="17.8" ry="17.1"/><ellipse cx="1433.8" cy="240.4" rx="25.5" ry="24.5"/><ellipse cx="1433.8" cy="240.4" rx="33.2" ry="31.9"/><ellipse cx="1433.8" cy="240.4" rx="40.9" ry="39.3"/><ellipse cx="1433.8" cy="240.4" rx="48.6" ry="46.7"/><ellipse cx="1433.8" cy="240.4" rx="56.3" ry="54"/></g>
<rect x="1398.2" y="214.1" width="71.3" height="28.3" fill="none" stroke="#8a6b55" stroke-width="1"/>
<rect x="1397.8" y="251.3" width="72.1" height="36" fill="#c8a27e"/>
<g clip-path="url(#b12)" fill="none" stroke="#6e5644" stroke-width="0.7"><ellipse cx="1433.8" cy="285.1" rx="2.4" ry="2.3"/><ellipse cx="1433.8" cy="285.1" rx="10.1" ry="9.7"/><ellipse cx="1433.8" cy="285.1" rx="17.8" ry="17.1"/><ellipse cx="1433.8" cy="285.1" rx="25.5" ry="24.5"/><ellipse cx="1433.8" cy="285.1" rx="33.2" ry="31.9"/><ellipse cx="1433.8" cy="285.1" rx="40.9" ry="39.3"/><ellipse cx="1433.8" cy="285.1" rx="48.6" ry="46.7"/><ellipse cx="1433.8" cy="285.1" rx="56.3" ry="54"/></g>
<rect x="1398.2" y="251.6" width="71.3" height="35.5" fill="none" stroke="#8a6b55" stroke-width="1"/>
<path d="M781 120.1V296.4" stroke="#888" stroke-width="1.6" fill="none" opacity=".75"/>
<path d="M776 120.50H786M776 127.51H786M776 213.98H786M776 242.87H786M776 251.42H786M776 287.17H786M776 296.38H786" stroke="#666" stroke-width="1" fill="none"/>
<g fill="#777" font-size="13px">
<text x="787" y="175.3">120</text>
<text x="787" y="232.9">40</text>
<text x="787" y="274">50</text>
<text transform="translate(774 208.2) rotate(-90)" text-anchor="middle">244,5</text>
<text x="929.2" y="342" text-anchor="middle">100</text>
<text x="1181.5" y="342" text-anchor="middle">600</text>
</g>
<path d="M893.1 326.5H1397.8M893.1 322V331.5M965.2 322V331.5M1397.8 322V331.5" stroke="#777" stroke-width="1" fill="none"/>
<g fill="#777" font-size="14px" text-anchor="middle"><text x="1181.5" y="114">Außen</text><text x="1181.5" y="313.6">Innen</text></g>
<text x="1542" y="312.6" font-size="14px" fill="#bdbdbd" text-anchor="end">ubakus.de</text>
<g font-size="14px" text-anchor="middle">
<circle cx="1161.5" cy="292.1" r="9.4" fill="#fff" stroke="#5a5a5a" stroke-width="0.8"/><text x="1161.5" y="297.1">1</text>
<circle cx="1181.5" cy="288.1" r="9.4" fill="#fff" stroke="#5a5a5a" stroke-width="0.8"/><text x="1181.5" y="293.1">2</text>
<circle cx="1201.5" cy="269.6" r="9.4" fill="#fff" stroke="#5a5a5a" stroke-width="0.8"/><text x="1201.5" y="274.6">3</text>
<circle cx="1201.5" cy="247.3" r="9.4" fill="#fff" stroke="#5a5a5a" stroke-width="0.8"/><text x="1201.5" y="252.3">4</text>
<circle cx="1221.5" cy="228.7" r="9.4" fill="#fff" stroke="#5a5a5a" stroke-width="0.8"/><text x="1221.5" y="233.7">5</text>
<circle cx="1221.5" cy="170.9" r="9.4" fill="#fff" stroke="#5a5a5a" stroke-width="0.8"/><text x="1221.5" y="175.9">6</text>
<circle cx="1221.5" cy="123.8" r="9.4" fill="#fff" stroke="#5a5a5a" stroke-width="0.8"/><text x="1221.5" y="128.8">7</text>
</g>
<path d="M1536.2 124L1562 124L1587 100M1464 133.5L1562 133.5L1587 124M1536.2 148L1587 148M1464 220L1470 217L1562 217L1587 172M1536.2 220L1562 220L1587 196M1536.2 247.2L1562 247.2L1587 220M1464 257.5L1562 257.5L1587 244M1536.2 268L1587 268M1536.2 287.7L1562 287.7L1587 292M1536.2 292.3L1562 292.3L1587 316" stroke="#6a6a6a" stroke-width="0.9" fill="none"/>
<g fill="#333"><circle cx="1536.2" cy="124" r="1.3"/><circle cx="1464" cy="133.5" r="1.3"/><circle cx="1536.2" cy="148" r="1.3"/><circle cx="1464" cy="220" r="1.3"/><circle cx="1536.2" cy="220" r="1.3"/><circle cx="1536.2" cy="247.2" r="1.3"/><circle cx="1464" cy="257.5" r="1.3"/><circle cx="1536.2" cy="268" r="1.3"/><circle cx="1536.2" cy="287.7" r="1.3"/><circle cx="1536.2" cy="292.3" r="1.3"/></g>
<g fill="#333" font-size="14px"><text x="1592.6" y="105">Fichte (10mm)</text><text x="1592.6" y="129">Fichte (120x100mm²)</text><text x="1592.6" y="153">Glaswolle WLG040 (120mm)</text><text x="1592.6" y="177">Fichte (40x100mm²)</text><text x="1592.6" y="201">Styropor (WLG040) (40mm)</text><text x="1592.6" y="225">Gipsfaserplatte (12mm)</text><text x="1592.6" y="249">Fichte (50x100mm²)</text><text x="1592.6" y="273">Steinwolle Fassadendämmplatte (50mm)</text><text x="1592.6" y="297">Dampfsperre (0,5mm)</text><text x="1592.6" y="321">Gipsfaserplatte (12mm)</text></g>
<g stroke="#3a3a3a" fill="none"><circle cx="781" cy="324" r="8" stroke-width="2.1" fill="#fff"/><path d="M777 324H785M781 320V328" stroke-width="2"/><path d="M786.8 330.4L794 336.6" stroke-width="3.6"/></g>
</svg>
<div class="ab" style="left:704px;top:611.5px;line-height:15px;white-space:nowrap;letter-spacing:-.022px;color:#850808">Gewerbliche Nutzung nur mit kostenpflichtigem Zugang. <span style="color:#2828de">Weitere Infos</span></div>
<div id="pn">
<div class="p " style="left:366px;top:15.3px;font-size:21px">U-Wert:</div>
<div class="p " style="left:444px;top:15.2px;font-size:25px">0,226</div>
<div class="p " style="left:513px;top:19.5px;font-size:12px">W/(m²K)</div>
<div class="bar" style="left:366px;top:43px;height:16px">
<i style="top:0;height:12px;border-top:1px solid #393939;border-left:1px solid #3d3d3d;border-right:1px solid #777;border-bottom:1px solid #747474"></i>
<i style="top:1px;left:1px;width:52px;height:10px;background:linear-gradient(#a5d682 0,#86c25a 1.5px,#82bf55)"></i>
<i style="top:12px;height:4px;border-top:1px solid #383838;border-left:1px solid #3d3d3d;border-right:1px solid #777;border-bottom:1px solid #747474;background:linear-gradient(90deg,#6c9c4c 0,#6c9c4c 24.3%,#9a1d1d 24.8%,#9a1d1d)"></i>
</div>
<div class="p " style="left:366px;top:65.2px;font-size:13px">GEG 2020/24 Bestand U ≤ 0.24</div>
<div class="ab" style="left:555.5px;top:63px;width:15px;height:15px;background:#cdcdcd;box-shadow:inset -1px -1px 0 #999"><div class="ab" style="left:2.6px;top:4px;border-left:4.9px solid transparent;border-right:4.9px solid transparent;border-top:8.5px solid #3a3a3a"></div></div>
<div class="p " style="left:366px;top:92.2px;font-size:13px">Beitrag zum Treibhauseffekt:</div>
<div class="bar" style="left:366px;top:108px;height:12px">
<i style="top:0;height:8px;border-top:1px solid #393939;border-left:1px solid #3d3d3d;border-right:1px solid #777;border-bottom:1px solid #747474"></i>
<i style="top:1px;left:1px;width:108px;height:6px;background:linear-gradient(#a5d682 0,#86c25a 1.5px,#82bf55)"></i>
<i style="top:8px;height:4px;border-top:1px solid #383838;border-left:1px solid #3d3d3d;border-right:1px solid #777;border-bottom:1px solid #747474;background:linear-gradient(90deg,#6c9c4c 0,#6c9c4c 45%,#b8a02a 75%,#b8601f 86%,#9a1d1d 96%)"></i>
</div>
<div class="p lo" style="left:366px;top:128.4px;font-size:12.5px">sehr gut</div>
<div class="p lo" style="right:1222px;top:128.4px;font-size:12.5px">mangelhaft</div>
<div class="p " style="left:618px;top:12.2px;font-size:13px">Tauwasser: 0 kg/m²</div>
<div class="bar" style="left:618px;top:28px;height:12px">
<i style="top:0;height:8px;border-top:1px solid #393939;border-left:1px solid #3d3d3d;border-right:1px solid #777;border-bottom:1px solid #747474"></i>
<i style="top:1px;left:1px;width:2px;height:6px;background:linear-gradient(#a5d682 0,#86c25a 1.5px,#82bf55)"></i>
<i style="top:8px;height:4px;border-top:1px solid #383838;border-left:1px solid #3d3d3d;border-right:1px solid #777;border-bottom:1px solid #747474;background:linear-gradient(90deg,#6c9c4c 0,#6c9c4c 45%,#b8a02a 74%,#b8601f 86%,#9a1d1d 96%)"></i>
</div>
<div class="p " style="left:618px;top:52.2px;font-size:13px">Holzfeuchte: +0,0 %</div>
<div class="bar" style="left:618px;top:68px;height:12px">
<i style="top:0;height:8px;border-top:1px solid #393939;border-left:1px solid #3d3d3d;border-right:1px solid #777;border-bottom:1px solid #747474"></i>
<i style="top:1px;left:1px;width:2px;height:6px;background:linear-gradient(#a5d682 0,#86c25a 1.5px,#82bf55)"></i>
<i style="top:8px;height:4px;border-top:1px solid #383838;border-left:1px solid #3d3d3d;border-right:1px solid #777;border-bottom:1px solid #747474;background:linear-gradient(90deg,#6c9c4c 0,#6c9c4c 20%,#b8a02a 31%,#b8601f 40%,#9a1d1d 50%)"></i>
</div>
<div class="p " style="left:618px;top:92.2px;font-size:13px">Trocknungsdauer: -</div>
<div class="bar" style="left:618px;top:108px;height:12px">
<i style="top:0;height:8px;border-top:1px solid #393939;border-left:1px solid #3d3d3d;border-right:1px solid #777;border-bottom:1px solid #747474"></i>
<i style="top:1px;left:1px;width:2px;height:6px;background:linear-gradient(#a5d682 0,#86c25a 1.5px,#82bf55)"></i>
<i style="top:8px;height:4px;border-top:1px solid #383838;border-left:1px solid #3d3d3d;border-right:1px solid #777;border-bottom:1px solid #747474;background:linear-gradient(90deg,#6c9c4c 0,#6c9c4c 30%,#b8a02a 55%,#b8601f 80%,#9a1d1d 95%)"></i>
</div>
<div class="p lo" style="left:618px;top:128.4px;font-size:12.5px">sehr gut</div>
<div class="p lo" style="right:970px;top:128.4px;font-size:12.5px">mangelhaft</div>
<div class="p " style="left:870px;top:12.2px;font-size:13px">sd-Wert: 502 m</div>
<div class="p " style="right:718px;top:12.2px;font-size:13px">Dicke: 24,45 cm</div>
<div class="p " style="right:718px;top:30.2px;font-size:13px">Gewicht: 53 kg/m²</div>
<div class="p " style="left:870px;top:50.2px;font-size:13px">Oberfläche innen: 18,3°C (56%)</div>
<div class="bar" style="left:870px;top:66px;height:12px">
<i style="top:0;height:8px;border-top:1px solid #393939;border-left:1px solid #3d3d3d;border-right:1px solid #777;border-bottom:1px solid #747474"></i>
<i style="top:1px;left:1px;width:101px;height:6px;background:linear-gradient(#a5d682 0,#86c25a 1.5px,#82bf55)"></i>
<i style="top:8px;height:4px;border-top:1px solid #383838;border-left:1px solid #3d3d3d;border-right:1px solid #777;border-bottom:1px solid #747474;background:linear-gradient(90deg,#9a1d1d 0,#9a1d1d 14%,#b8601f 20%,#b8a02a 27%,#6c9c4c 45%)"></i>
</div>
<div class="p " style="left:870px;top:90.2px;font-size:13px">Trocknungsreserve: 1859 g/m²a</div>
<div class="bar" style="left:870px;top:106px;height:12px">
<i style="top:0;height:8px;border-top:1px solid #393939;border-left:1px solid #3d3d3d;border-right:1px solid #777;border-bottom:1px solid #747474"></i>
<i style="top:1px;left:1px;width:230px;height:6px;background:linear-gradient(#a5d682 0,#86c25a 1.5px,#82bf55)"></i>
<i style="top:8px;height:4px;border-top:1px solid #383838;border-left:1px solid #3d3d3d;border-right:1px solid #777;border-bottom:1px solid #747474;background:linear-gradient(90deg,#9a1d1d 0,#9a1d1d 44%,#b8601f 49%,#b8a02a 54%,#6c9c4c 64%)"></i>
</div>
<div class="p lo" style="left:870px;top:126.4px;font-size:12.5px">mangelhaft</div>
<div class="p lo" style="right:718px;top:126.4px;font-size:12.5px">sehr gut</div>
<div class="p " style="left:1122px;top:12.2px;font-size:13px">Temp.Ampl.Dämpfung (1/TAV): 15,4</div>
<div class="bar" style="left:1122px;top:28px;height:12px">
<i style="top:0;height:8px;border-top:1px solid #393939;border-left:1px solid #3d3d3d;border-right:1px solid #777;border-bottom:1px solid #747474"></i>
<i style="top:1px;left:1px;width:177px;height:6px;background:linear-gradient(#a5d682 0,#86c25a 1.5px,#82bf55)"></i>
<i style="top:8px;height:4px;border-top:1px solid #383838;border-left:1px solid #3d3d3d;border-right:1px solid #777;border-bottom:1px solid #747474;background:linear-gradient(90deg,#9a1d1d 0,#b8601f 7%,#b8a02a 14%,#6c9c4c 32%)"></i>
</div>
<div class="p " style="left:1122px;top:52.2px;font-size:13px">Phasenverschiebung: 9,1 h</div>
<div class="bar" style="left:1122px;top:68px;height:12px">
<i style="top:0;height:8px;border-top:1px solid #393939;border-left:1px solid #3d3d3d;border-right:1px solid #777;border-bottom:1px solid #747474"></i>
<i style="top:1px;left:1px;width:117px;height:6px;background:linear-gradient(#a5d682 0,#86c25a 1.5px,#82bf55)"></i>
<i style="top:8px;height:4px;border-top:1px solid #383838;border-left:1px solid #3d3d3d;border-right:1px solid #777;border-bottom:1px solid #747474;background:linear-gradient(90deg,#9a1d1d 0,#b8601f 8%,#b8a02a 18%,#6c9c4c 38%)"></i>
</div>
<div class="p " style="left:1122px;top:92.2px;font-size:13px">Speicherfähigkeit innen: 41 kJ/m²K</div>
<div class="bar" style="left:1122px;top:108px;height:12px">
<i style="top:0;height:8px;border-top:1px solid #393939;border-left:1px solid #3d3d3d;border-right:1px solid #777;border-bottom:1px solid #747474"></i>
<i style="top:1px;left:1px;width:94px;height:6px;background:linear-gradient(#c3dc6e 0,#a9cb45 1.5px,#a6c840)"></i>
<i style="top:8px;height:4px;border-top:1px solid #383838;border-left:1px solid #3d3d3d;border-right:1px solid #777;border-bottom:1px solid #747474;background:linear-gradient(90deg,#9a1d1d 0,#9a1d1d 5%,#b8601f 14%,#b8a02a 24%,#6c9c4c 45%)"></i>
</div>
<div class="p lo" style="left:1122px;top:128.4px;font-size:12.5px">mangelhaft</div>
<div class="p lo" style="right:466px;top:128.4px;font-size:12.5px">sehr gut</div>
<svg class="ab" style="left:570px;top:10px" width="35" height="27" viewBox="570 645 35 27"><g fill="#adadad"><circle cx="582.9" cy="655.1" r="4.4"/><path d="M583.4 655.6L592.9 664.9" stroke="#adadad" stroke-width="3.5" stroke-linecap="round" fill="none"/></g><path d="M581.9 654.1L577.5 649.7" stroke="#4b4b4b" stroke-width="4.1" stroke-linecap="round" fill="none"/><circle cx="592.9" cy="664.8" r="0.8" fill="#777"/></svg>
</div>
</body></html>
